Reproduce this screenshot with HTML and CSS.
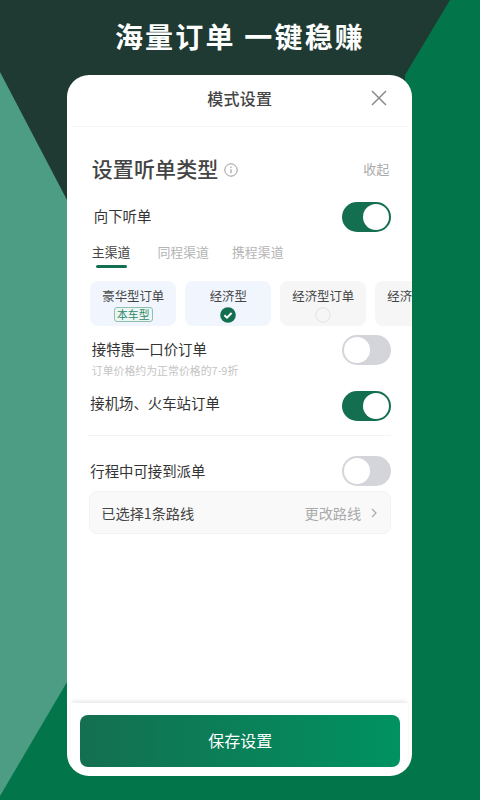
FILE: index.html
```html
<!DOCTYPE html>
<html>
<head>
    <title>模式设置</title>
    <link rel="stylesheet" href="styles.css">
</head>
<body>
    <svg class="backdrop" viewBox="0 0 480 800">
        <rect width="480" height="800" fill="#02754a"/>
        <polygon points="0,0 450,0 405,75 405,400 0,400" fill="#1f3a33"/>
        <polygon points="0,72 67,200 67,682 0,796" fill="#4d9c84"/>
    </svg>

    <div class="page">
        <h1 class="headline">海量订单 一键稳赚</h1>

        <div class="card">
            <div class="card-head">
                <span class="card-title">模式设置</span>
                <svg class="close" viewBox="0 0 16 16"><path d="M1 1L15 15M15 1L1 15" stroke="#8a8a8a" stroke-width="1.5" fill="none"/></svg>
            </div>

            <div class="card-body">
                <div class="section-head">
                    <span class="section-title">设置听单类型</span>
                    <svg class="info" viewBox="0 0 14 14">
                        <circle cx="7" cy="7" r="6.2" stroke="#999" stroke-width="1" fill="none"/>
                        <path d="M7 6.2V10.2" stroke="#999" stroke-width="1.1"/>
                        <circle cx="7" cy="4.2" r="0.7" fill="#999"/>
                    </svg>
                    <span class="collapse">收起</span>
                </div>

                <div class="row row-down">
                    <span class="label label-down">向下听单</span>
                    <span class="toggle on"></span>
                </div>

                <div class="tabs">
                    <span class="tab active">主渠道</span>
                    <span class="tab">同程渠道</span>
                    <span class="tab">携程渠道</span>
                </div>

                <div class="chips">
                    <div class="chip chip-blue">
                        <span class="chip-name">豪华型订单</span>
                        <span class="badge">本车型</span>
                    </div>
                    <div class="chip chip-blue">
                        <span class="chip-name">经济型</span>
                        <svg class="mark" viewBox="0 0 16 16">
                            <circle cx="8" cy="8" r="7.8" fill="#146f50"/>
                            <path d="M4.4 8.2L7 10.7L11.6 6" stroke="#fff" stroke-width="1.9" fill="none"/>
                        </svg>
                    </div>
                    <div class="chip">
                        <span class="chip-name">经济型订单</span>
                        <svg class="mark" viewBox="0 0 16 16"><circle cx="8" cy="8" r="7.2" fill="none" stroke="#e2e2e2" stroke-width="1"/></svg>
                    </div>
                    <div class="chip chip-cut">
                        <span class="chip-name">经济</span>
                    </div>
                </div>

                <div class="row row-deal">
                    <div class="label-wrap">
                        <span class="label">接特惠一口价订单</span>
                        <span class="hint">订单价格约为正常价格的7-9折</span>
                    </div>
                    <span class="toggle"></span>
                </div>

                <div class="row row-station">
                    <span class="label">接机场、火车站订单</span>
                    <span class="toggle on"></span>
                </div>

                <div class="divider"></div>

                <div class="row row-trip">
                    <span class="label">行程中可接到派单</span>
                    <span class="toggle"></span>
                </div>

                <div class="route">
                    <span class="route-name">已选择1条路线</span>
                    <span class="route-change">更改路线</span>
                    <svg class="chevron" viewBox="0 0 6 10"><path d="M1 1L5 5L1 9" stroke="#aaa" stroke-width="1.2" fill="none"/></svg>
                </div>
            </div>

            <div class="card-foot">
                <button class="save-btn">保存设置</button>
            </div>
        </div>
    </div>
</body>
</html>
```

FILE: styles.css
```css
* { box-sizing: border-box; }

body {
    margin: 0;
    width: 480px;
    height: 800px;
    overflow: hidden;
    font-family: "Noto Sans CJK SC", "Liberation Sans", sans-serif;
    color: #333;
}

.backdrop { position: absolute; left: 0; top: 0; width: 480px; height: 800px; }

.page { position: relative; display: flex; flex-direction: column; align-items: center; height: 800px; }

.headline {
    margin: 0;
    height: 75px;
    padding-top: 15px;
    font-size: 28px;
    line-height: 42px;
    font-weight: 700;
    letter-spacing: 2.2px;
    color: #fff;
    white-space: pre;
}

.card {
    width: 345px;
    height: 701px;
    margin-left: -0.5px;
    background: #fff;
    border-radius: 22px;
    display: flex;
    flex-direction: column;
    overflow: hidden;
}

.card-head {
    position: relative;
    height: 52px;
    margin: 0 4px;
    border-bottom: 1px solid #f4f4f4;
    display: flex;
    align-items: center;
    justify-content: center;
}
.card-title { font-size: 16px; font-weight: 500; letter-spacing: 0.3px; color: #444; margin-bottom: 5px; }
.close { position: absolute; right: 21px; top: 15px; width: 16px; height: 16px; }

.card-body { flex: 1; padding: 0 21px 0 22px; }

.section-head { display: flex; align-items: center; margin-top: 26px; height: 34px; padding-left: 2.5px; }
.section-title { font-size: 21px; font-weight: 500; color: #444; margin-top: -4px; letter-spacing: 0.1px; }
.info { width: 14px; height: 14px; margin-left: 5.5px; }
.collapse { margin-left: auto; font-size: 13px; color: #aaa; margin-right: 2px; margin-top: -4px; }

.row { display: flex; align-items: center; justify-content: space-between; }
.label { font-size: 14.4px; color: #333; line-height: 20px; }
.label-wrap { display: flex; flex-direction: column; padding-left: 2.5px; }
.hint { font-size: 10.9px; line-height: 14px; color: #c4c4c4; margin-top: 4px; }

.toggle {
    position: relative;
    width: 49px;
    height: 30px;
    border-radius: 15px;
    background: #d4d5da;
    flex-shrink: 0;
}
.toggle::after {
    content: "";
    position: absolute;
    left: 2px;
    top: 2px;
    width: 26px;
    height: 26px;
    border-radius: 50%;
    background: #fff;
}
.toggle.on { background: #146f50; }
.toggle.on::after { left: 21px; }

.row-down { margin-top: 15px; height: 30px; }
.label-down { padding-left: 4.5px; margin-top: -2px; }

.tabs { display: flex; gap: 23px; margin-top: 9px; padding-left: 2.5px; height: 30px; }
.tab { position: relative; font-size: 12.9px; line-height: 22px; color: #b4b4b4; }
.tab.active { color: #444; margin-right: 4px; }
.tab.active::after {
    content: "";
    position: absolute;
    left: 4px;
    right: 3px;
    top: 24px;
    height: 3px;
    border-radius: 2px;
    background: #146f50;
}

.chips { display: flex; gap: 9px; margin-top: 10px; margin-right: -21px; overflow: hidden; padding-left: 1px; }
.chip {
    flex: 0 0 86px;
    height: 45px;
    border-radius: 8px;
    background: #f6f6f6;
    display: flex;
    flex-direction: column;
    align-items: center;
}
.chip-blue { background: #f1f6fe; }
.chip-cut { flex-basis: 36px; border-radius: 8px 0 0 8px; padding-left: 12px; align-items: flex-start; }
.chip-name { font-size: 12.4px; line-height: 18px; margin-top: 6px; color: #444; white-space: nowrap; }
.badge {
    font-size: 10.8px;
    line-height: 13px;
    height: 15px;
    width: 39px;
    margin-top: 2px;
    text-align: center;
    color: #2f8a6c;
    background: #eef6f4;
    border: 1px solid #8fbfb0;
    border-radius: 3px;
}
.mark { width: 16px; height: 16px; margin-top: 2px; }

.row-deal { margin-top: 9px; align-items: flex-start; }
.row-deal .label { margin-top: 4px; }
.row-station { margin-top: 14px; height: 30px; }
.row-station .label { margin-top: -6px; padding-left: 1px; }

.divider { height: 1px; background: #f3f3f3; margin: 14px 0 0 -1px; }

.row-trip { margin-top: 20px; height: 30px; padding-left: 1px; }

.route {
    display: flex;
    align-items: center;
    height: 43px;
    margin: 5px 0 0 0;
    padding: 0 13px 0 11px;
    background: #f9f9f9;
    border: 1px solid #f3f3f3;
    border-radius: 8px;
}
.route-name { font-size: 14.2px; color: #444; }
.route-change { margin-left: auto; font-size: 14.2px; color: #aaa; }
.chevron { width: 6px; height: 10px; margin-left: 10px; }

.card-foot {
    height: 73px;
    padding: 12px 13px 0;
    margin: 0 4px;
    box-shadow: 0 -3px 4px -1px #e8e8e8;
}
.save-btn {
    display: block;
    width: 320px;
    height: 52px;
    margin-left: -4px;
    padding: 0 0 2px;
    border: 0;
    border-radius: 8px;
    font-family: inherit;
    font-size: 16px;
    color: #fff;
    background: linear-gradient(90deg, #146f50, #009261);
}
```
